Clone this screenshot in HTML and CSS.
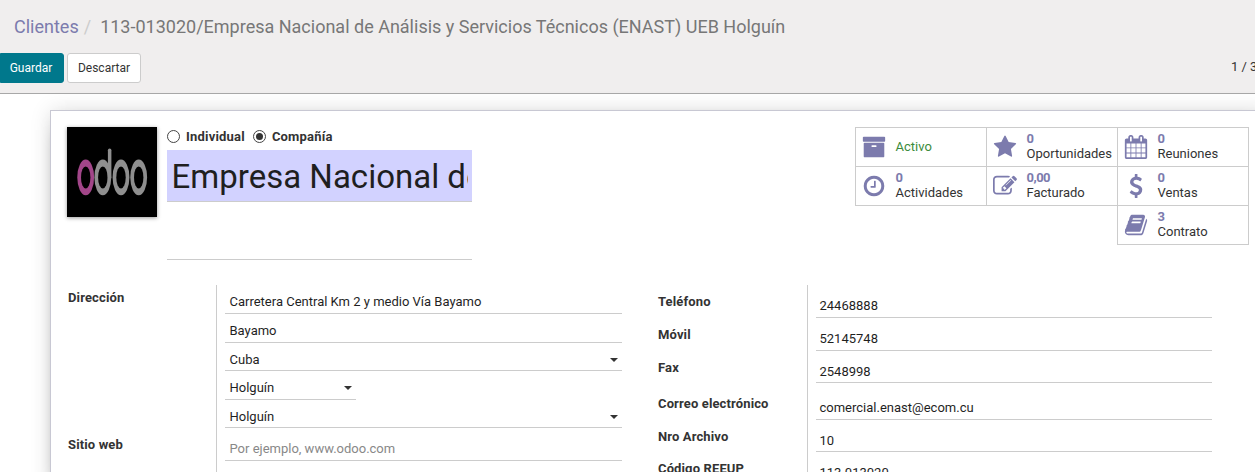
FILE: index.html
```html
<!DOCTYPE html>
<html lang="es">
<head>
<meta charset="utf-8">
<title>Clientes - Odoo</title>
<link rel="stylesheet" href="styles.css">
</head>
<body>
<header class="control-panel">
  <div class="breadcrumb"><a class="crumb-link">Clientes</a><span class="crumb-sep">/</span><span class="crumb-current">113-013020/Empresa Nacional de Análisis y Servicios Técnicos (ENAST) UEB Holguín</span></div>
  <div class="toolbar">
    <button class="btn btn-primary">Guardar</button>
    <button class="btn btn-default">Descartar</button>
    <span class="pager">1 / 3</span>
  </div>
</header>
<main class="sheet">
  <section class="head">
    <svg class="avatar" viewBox="0 0 90 90">
      <rect width="90" height="90" fill="#000"/>
      <ellipse cx="18.7" cy="50.4" rx="8.4" ry="17.8" fill="#a24689"/>
      <g fill="#8f8f8f">
        <ellipse cx="35.8" cy="50.4" rx="8.4" ry="17.8"/>
        <ellipse cx="54" cy="50.4" rx="8.4" ry="17.8"/>
        <ellipse cx="71.7" cy="50.4" rx="8.4" ry="17.8"/>
      </g>
      <g fill="#000">
        <ellipse cx="18.7" cy="50.4" rx="4.7" ry="11"/>
        <ellipse cx="35.8" cy="50.4" rx="4.7" ry="11"/>
        <ellipse cx="54" cy="50.4" rx="4.7" ry="11"/>
        <ellipse cx="71.7" cy="50.4" rx="4.7" ry="11"/>
      </g>
      <rect x="40.9" y="21.5" width="3.5" height="31" rx="1.7" fill="#8f8f8f"/>
    </svg>
    <div class="identity">
      <div class="kinds">
        <svg class="radio" viewBox="0 0 13 13"><circle cx="6.5" cy="6.5" r="6" fill="#fff" stroke="#444"/></svg><span>Individual</span>
        <svg class="radio second" viewBox="0 0 13 13"><circle cx="6.5" cy="6.5" r="6" fill="#fff" stroke="#444"/><circle cx="6.5" cy="6.5" r="3.5" fill="#333"/></svg><span>Compañía</span>
      </div>
      <div class="name-field"><div class="name-text">Empresa Nacional de Análisis y Servicios Técnicos (ENAST) UEB Holguín</div></div>
      <div class="parent-field"></div>
    </div>
    <div class="stats">
      <div class="stat"><svg class="icon" viewBox="0 0 1792 1792"><path d="M1088 832q0-26-19-45t-45-19h-256q-26 0-45 19t-19 45 19 45 45 19h256q26 0 45-19t19-45zm576-192v960q0 26-19 45t-45 19h-1408q-26 0-45-19t-19-45v-960q0-26 19-45t45-19h1408q26 0 45 19t19 45zm64-448v256q0 26-19 45t-45 19h-1536q-26 0-45-19t-19-45v-256q0-26 19-45t45-19h1536q26 0 45 19t19 45z"/></svg><div class="stat-info"><span class="active">Activo</span></div></div>
      <div class="stat"><svg class="icon" viewBox="0 0 1792 1792"><path d="M1728 647q0 22-26 48l-363 354 86 500q1 7 1 20 0 21-10.500 35.500t-30.500 14.500q-19 0-40-12l-449-236-449 236q-22 12-40 12-21 0-31.500-14.500t-10.500-35.500q0-6 2-20l86-500-364-354q-25-27-25-48 0-37 56-46l502-73 225-455q19-41 49-41t49 41l225 455 502 73q56 9 56 46z"/></svg><div class="stat-info"><b>0</b><span>Oportunidades</span></div></div>
      <div class="stat"><svg class="icon" viewBox="0 0 1792 1792"><path d="M192 1664h288v-288h-288v288zm352 0h320v-288h-320v288zm-352-352h288v-320h-288v320zm352 0h320v-320h-320v320zm-352-384h288v-288h-288v288zm736 736h320v-288h-320v288zm-384-736h320v-288h-320v288zm768 736h288v-288h-288v288zm-384-352h320v-320h-320v320zm-352-864v-288q0-13-9.500-22.500t-22.500-9.500h-64q-13 0-22.500 9.500t-9.500 22.500v288q0 13 9.500 22.500t22.500 9.500h64q13 0 22.500-9.500t9.500-22.500zm736 864h288v-320h-288v320zm-384-384h320v-288h-320v288zm384 0h288v-288h-288v288zm32-480v-288q0-13-9.500-22.500t-22.500-9.500h-64q-13 0-22.500 9.500t-9.500 22.500v288q0 13 9.500 22.500t22.500 9.500h64q13 0 22.500-9.500t9.500-22.500zm384-64v1280q0 52-38 90t-90 38h-1408q-52 0-90-38t-38-90v-1280q0-52 38-90t90-38h128v-96q0-66 47-113t113-47h64q66 0 113 47t47 113v96h384v-96q0-66 47-113t113-47h64q66 0 113 47t47 113v96h128q52 0 90 38t38 90z"/></svg><div class="stat-info"><b>0</b><span>Reuniones</span></div></div>
      <div class="stat"><svg class="icon" viewBox="0 0 1792 1792"><path d="M1024 544v448q0 14-9 23t-23 9h-320q-14 0-23-9t-9-23v-64q0-14 9-23t23-9h224v-352q0-14 9-23t23-9h64q14 0 23 9t9 23zm416 352q0-148-73-273t-198-198-273-73-273 73-198 198-73 273 73 273 198 198 273 73 273-73 198-198 73-273zm224 0q0 209-103 385.500t-279.500 279.500-385.500 103-385.500-103-279.500-279.500-103-385.500 103-385.500 279.500-279.500 385.500-103 385.500 103 279.500 279.500 103 385.500z"/></svg><div class="stat-info"><b>0</b><span>Actividades</span></div></div>
      <div class="stat"><svg class="icon" viewBox="0 0 1792 1792"><path d="M888 1184l116-116-152-152-116 116v56h96v96h56zm440-720q-16-16-33 1l-350 350q-17 17-1 33t33-1l350-350q17-17 1-33zm80 594v190q0 119-84.500 203.500t-203.500 84.500h-832q-119 0-203.500-84.500t-84.500-203.500v-832q0-119 84.500-203.500t203.500-84.500h832q63 0 117 25 15 7 18 23 3 17-9 29l-49 49q-14 14-32 8-23-6-45-6h-832q-66 0-113 47t-47 113v832q0 66 47 113t113 47h832q66 0 113-47t47-113v-126q0-13 9-22l64-64q15-15 35-7t20 29zm-96-738l288 288-672 672h-288v-288zm444 132l-92 92-288-288 92-92q28-28 68-28t68 28l152 152q28 28 28 68t-28 68z"/></svg><div class="stat-info"><b>0,00</b><span>Facturado</span></div></div>
      <div class="stat"><svg class="icon" viewBox="0 0 1792 1792"><path d="M1362 1185q0 153-99.500 263.500t-258.500 136.500v175q0 14-9 23t-23 9h-135q-13 0-22.500-9.500t-9.500-22.500v-175q-66-9-127.500-31t-101.500-44.500-74-48-46.500-37.500-17.500-18q-17-21-2-41l103-135q7-10 23-12 15-2 24 9l2 2q113 99 243 125 37 8 74 8 81 0 142.500-43t61.500-122q0-28-15-53t-33.500-42-58.500-37.500-66-32-80-32.500q-39-16-61.500-25t-61.500-26.500-62.500-31-56.500-35.500-53.500-42.500-43.500-49-35.500-58-21-66.500-8.500-78q0-138 98-242t255-134v-180q0-13 9.500-22.500t22.500-9.500h135q14 0 23 9t9 23v176q57 6 110.500 23t87 33.500 63.500 37.500 39 29 15 14q17 18 5 38l-81 146q-8 15-23 16-14 3-27-7-3-3-14.500-12t-39-26.500-58.500-32-74.500-26-85.500-11.500q-95 0-155 43t-60 111q0 26 8.500 48t29.500 41.500 39.500 33 56 31 60.500 27 70 27.500q53 20 81 31.500t76 35 75.500 42.500 62 50 53 63.500 31.500 76.500 13 94z"/></svg><div class="stat-info"><b>0</b><span>Ventas</span></div></div>
      <div class="stat last"><svg class="icon" viewBox="0 0 1792 1792"><path d="M1703 478q40 57 18 129l-275 906q-19 64-76.500 107.500t-122.500 43.500h-923q-77 0-148.500-53.500t-99.500-131.500q-24-67-2-127 0-4 3-27t4-37q1-8-3-21.500t-3-19.500q2-11 8-21t16.500-23.500 16.500-23.500q23-38 45-91.500t30-91.500q3-10 .5-30t-.5-28q3-11 17-28t17-23q21-36 42-92t25-90q1-9-2.500-32t.5-28q4-13 22-30.500t22-22.500q19-26 42.500-84.500t27.500-96.500q1-8-3-25.500t-2-26.500q2-8 9-18t18-23 17-21q8-12 16.500-30.500t15-35 16-36 19.500-32 26.500-23.500 36-11.500 47.500 5.500l-1 3q38-9 51-9h761q74 0 114 56t18 130l-274 906q-36 119-71.500 153.500t-128.500 34.500h-869q-27 0-38 15-11 16-1 43 24 70 144 70h923q29 0 56-15.500t35-41.500l300-987q7-22 5-57 38 15 59 43zm-1064 2q-4 13 2 22.500t20 9.500h608q13 0 25.500-9.500t16.500-22.500l21-64q4-13-2-22.500t-20-9.500h-608q-13 0-25.500 9.500t-16.500 22.500zm-83 256q-4 13 2 22.500t20 9.500h608q13 0 25.500-9.500t16.500-22.500l21-64q4-13-2-22.500t-20-9.500h-608q-13 0-25.500 9.500t-16.500 22.500z"/></svg><div class="stat-info"><b>3</b><span>Contrato</span></div></div>
    </div>
  </section>
  <section class="groups">
    <div class="group">
      <div class="row h29"><label>Dirección</label><div class="cell"><div class="field">Carretera Central Km 2 y medio Vía Bayamo</div></div></div>
      <div class="row h29"><label></label><div class="cell"><div class="field">Bayamo</div></div></div>
      <div class="row h28 tight"><label></label><div class="cell"><div class="field select">Cuba</div></div></div>
      <div class="row h29"><label></label><div class="cell"><div class="field select short">Holguín</div></div></div>
      <div class="row h28 tight"><label></label><div class="cell"><div class="field select">Holguín</div></div></div>
      <div class="row h33"><label>Sitio web</label><div class="cell"><div class="field placeholder">Por ejemplo, www.odoo.com</div></div></div>
      <div class="row h33"><label></label><div class="cell"></div></div>
    </div>
    <div class="group">
      <div class="row h33"><label>Teléfono</label><div class="cell"><div class="field">24468888</div></div></div>
      <div class="row h33"><label>Móvil</label><div class="cell"><div class="field">52145748</div></div></div>
      <div class="row h32 tight"><label>Fax</label><div class="cell"><div class="field">2548998</div></div></div>
      <div class="row h37"><label>Correo electrónico</label><div class="cell"><div class="field">comercial.enast@ecom.cu</div></div></div>
      <div class="row h32 tight"><label>Nro Archivo</label><div class="cell"><div class="field">10</div></div></div>
      <div class="row h33"><label>Código REEUP</label><div class="cell"><div class="field">113.013020</div></div></div>
    </div>
  </section>
</main>
</body>
</html>
```
FILE: styles.css
```css
* { box-sizing: border-box; }

body {
  margin: 0;
  height: 472px;
  overflow: hidden;
  background: #fff;
  color: #333;
  font: 13px/16px Roboto, "Liberation Sans", sans-serif;
}

.control-panel {
  height: 94px;
  overflow: hidden;
  background: #f0eeee;
  border-bottom: 1px solid #a8a8a8;
}

.breadcrumb {
  height: 53px;
  padding: 15px 0 0 14px;
  font-size: 18px;
  line-height: 24px;
  white-space: nowrap;
  color: #777;
}

.crumb-link { color: #7c7bad; }
.crumb-sep { padding: 0 9px 0 5px; color: #ccc; }

.toolbar { display: flex; width: 1275px; }

.btn {
  height: 30px;
  padding: 0;
  border: 1px solid #ccc;
  border-radius: 3px;
  font: 12px/18px Roboto, sans-serif;
}

.btn-primary {
  width: 64px;
  margin-right: 3px;
  padding-right: 2px;
  background: #00788c;
  border-color: #00788c;
  color: #fff;
  border-radius: 0 3px 3px 0;
}

.btn-default { width: 74px; background: #fff; color: #333; }

.pager { margin-left: auto; width: 44px; padding-top: 6px; white-space: nowrap; }

.sheet {
  width: 1220px;
  height: 380px;
  margin: 16px 0 0 50px;
  padding: 16px 0 0 16px;
  border: 1px solid #c8c8d3;
  background: #fff;
  box-shadow: 0 5px 20px -15px #000, 0 0 20px rgba(0, 0, 0, .12);
}

.head { display: flex; height: 158px; }

.avatar { width: 90px; height: 90px; margin-right: 10px; box-shadow: 0 1px 4px rgba(0, 0, 0, .4); }

.identity { width: 305px; margin-right: 383px; }

.kinds { display: flex; height: 23px; padding-top: 2px; font-weight: 700; letter-spacing: .2px; }

.radio { width: 13px; height: 13px; margin: 1px 6px 0 0; }
.radio.second { margin-left: 8px; }

.name-field {
  height: 52px;
  padding: 0 4px;
  background: #d2d2ff;
  border-bottom: 1px solid #ccc;
}

.name-text {
  overflow: hidden;
  white-space: nowrap;
  height: 51px;
  padding-left: .6px;
  font-size: 33px;
  line-height: 53px;
  color: #1f1f1f;
}

.parent-field { height: 58px; border-bottom: 1px solid #ccc; }

.stats {
  display: grid;
  grid-template-columns: repeat(3, 131px);
  grid-auto-rows: 39px;
}

.stat {
  display: flex;
  align-items: center;
  width: 132px;
  height: 40px;
  padding-left: 6px;
  border: 1px solid #ccc;
}

.stat.last { grid-column: 3; }

.icon { width: 24px; height: 24px; margin: 0 9.5px 1px 0; fill: #7c7bad; flex: none; }

.stat-info { display: flex; flex-direction: column; padding-bottom: 2px; line-height: 15px; white-space: nowrap; }
.stat-info b { color: #7c7bad; letter-spacing: -.5px; }
.active { color: #3c8b3c; }

.groups { display: flex; gap: 36px; }
.group:first-child { width: 555px; }
.group { width: 554px; }

.row { display: grid; grid-template-columns: 148px 1fr; padding-left: 1px; }
.group + .group .row { grid-template-columns: 149px 1fr; padding-left: 0; }

.h28 { height: 28px; }
.h29 { height: 29px; }
.h32 { height: 32px; }
.h33 { height: 33px; }
.h37 { height: 37px; }

label { align-self: end; padding-bottom: 8px; font-weight: 700; letter-spacing: .13px; white-space: nowrap; }

.cell {
  display: flex;
  align-items: flex-end;
  padding-left: 8px;
  border-left: 1px solid #ccc;
}

.field {
  display: flex;
  align-items: center;
  justify-content: space-between;
  width: 100%;
  padding: 0 4px 3px 4.5px;
  border-bottom: 1px solid #ccc;
  color: #1f1f1f;
  white-space: nowrap;
}

.group + .group .field { padding-left: 3.5px; }
.field.short { width: 131px; }
.tight label { padding-bottom: 7px; }
.tight .field { padding-bottom: 2px; }
.field.placeholder { color: #888; }

.select::after {
  content: "";
  border: 4px solid transparent;
  border-top-color: #333;
  border-bottom: 0;
}
```
